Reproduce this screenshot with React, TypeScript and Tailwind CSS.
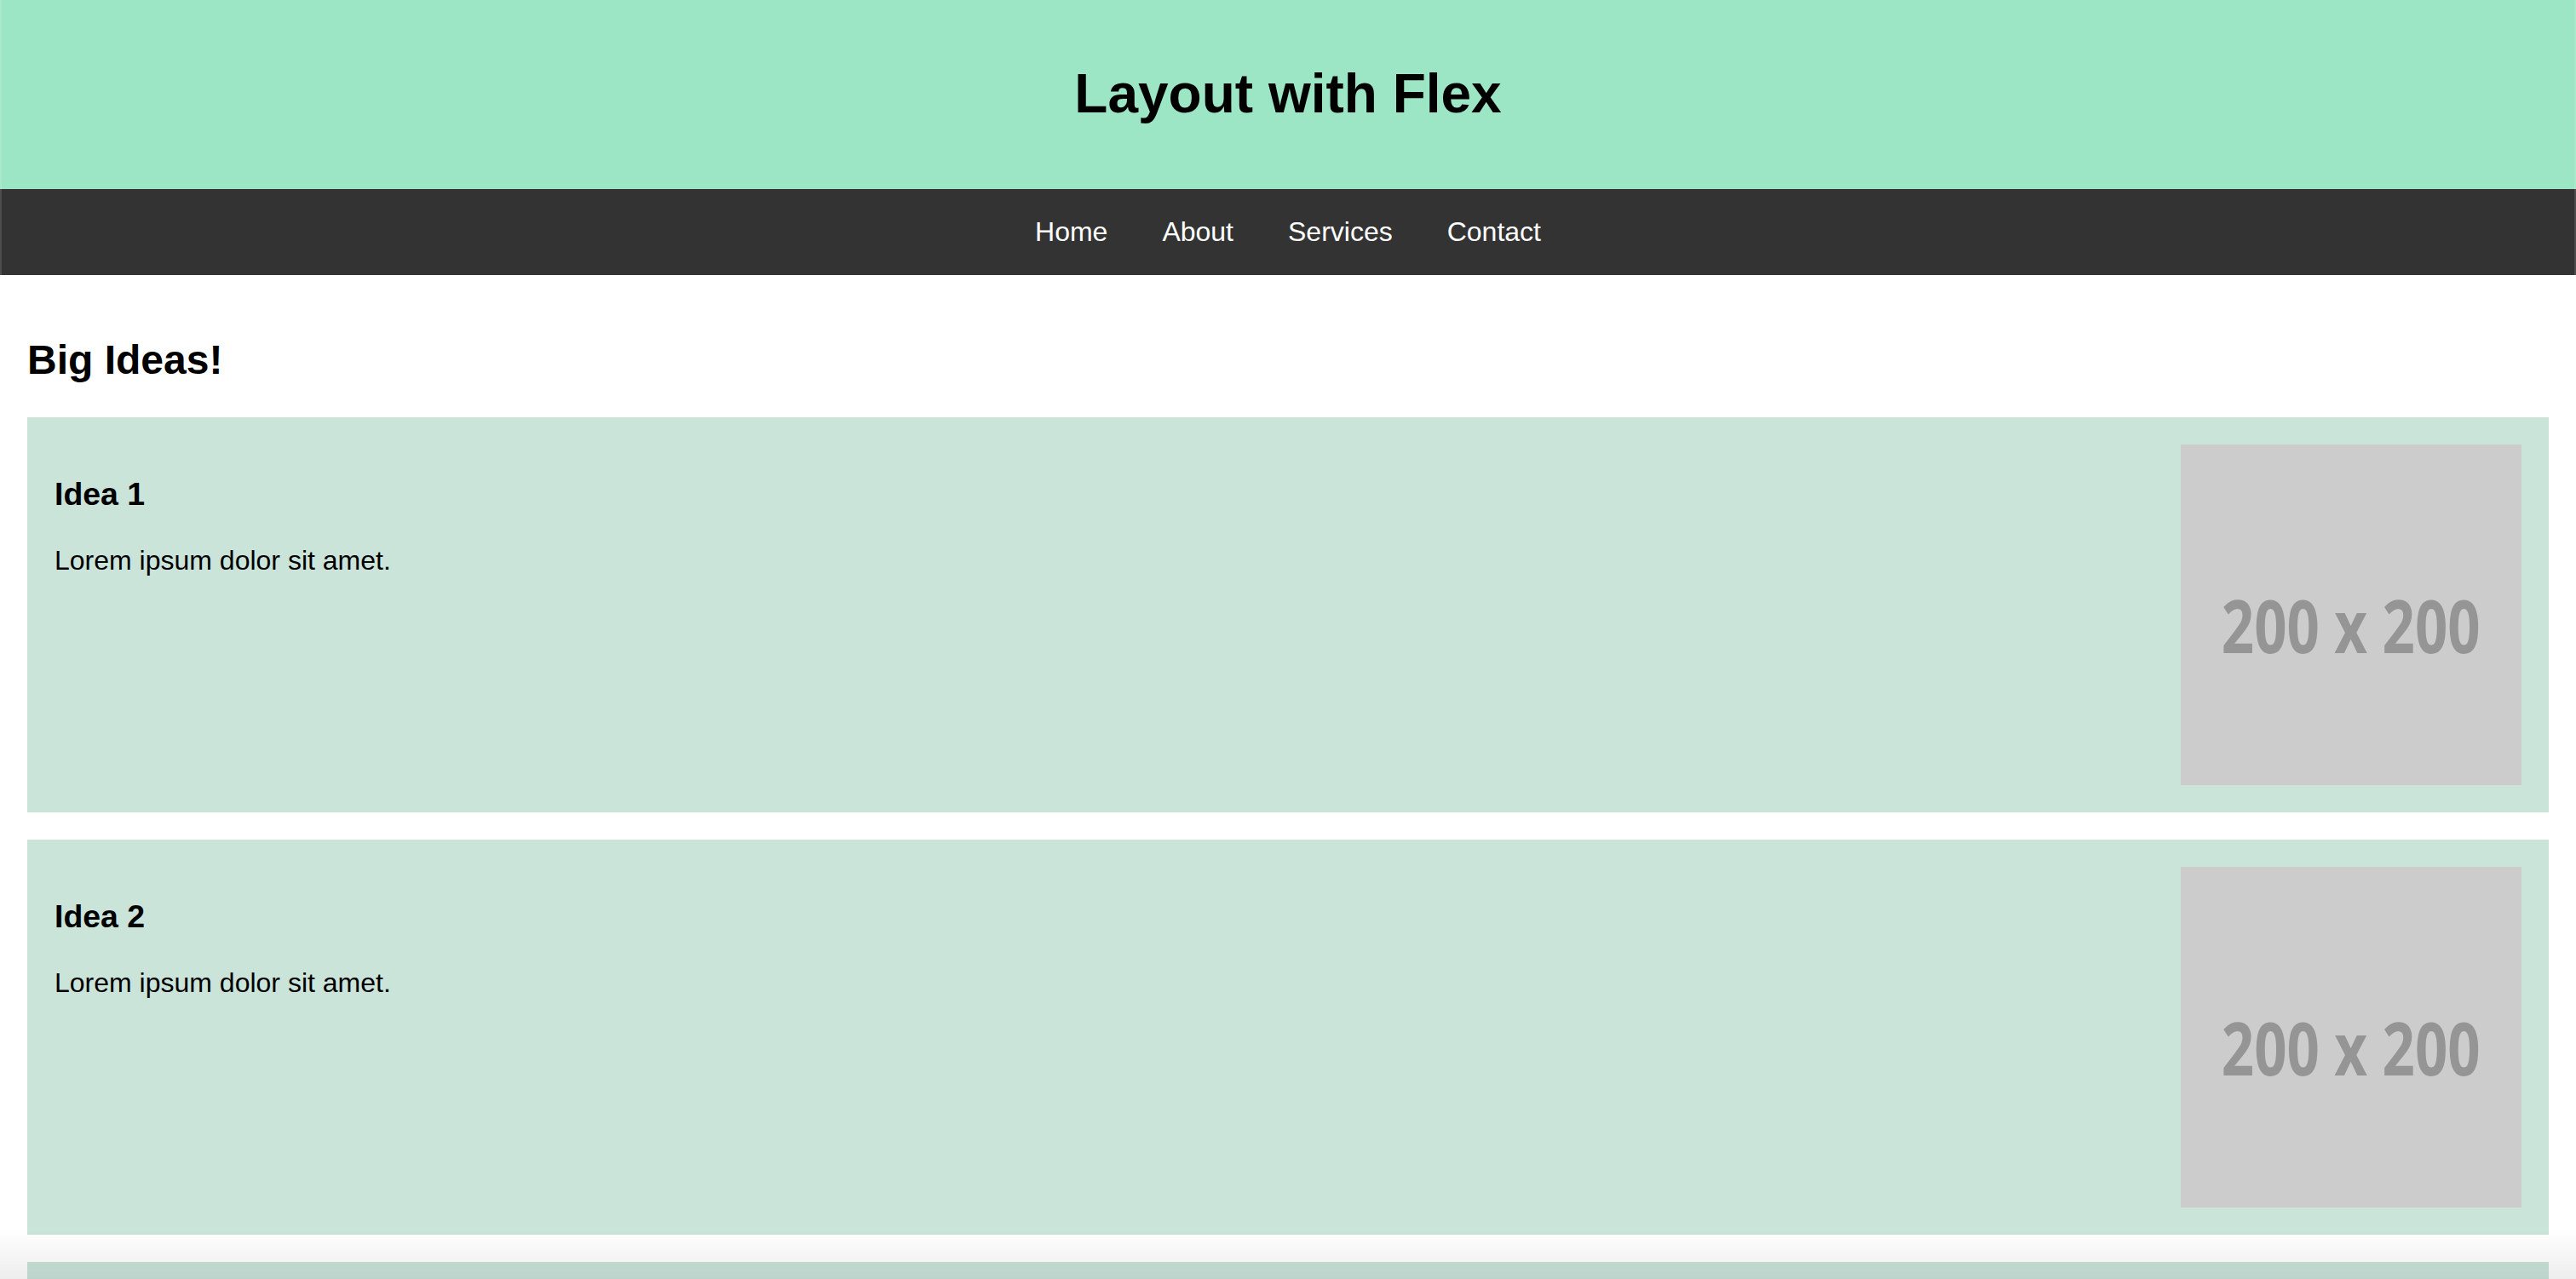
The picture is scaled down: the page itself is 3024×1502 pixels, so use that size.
import React from "react";

function Placeholder() {
  return (
    <div className="flex h-[400px] w-[400px] shrink-0 items-center justify-center bg-[#cccccc] pt-[24px]">
      <span
        className="inline-block scale-x-[0.78] text-[86px] font-bold leading-none text-[#959595]"
        style={{ fontFamily: '"Open Sans", "Liberation Sans", sans-serif' }}
      >
        200 x 200
      </span>
    </div>
  );
}

function Card({ title }: { title: string }) {
  return (
    <div className="flex items-start justify-between bg-[#cae4da] p-8">
      <div>
        <h3 className="my-[37.44px] text-[37.44px] font-bold leading-[1.149]">{title}</h3>
        <p className="my-[32px] text-[32px] leading-[1.149]">Lorem ipsum dolor sit amet.</p>
      </div>
      <Placeholder />
    </div>
  );
}

export default function App() {
  return (
    <div
      className="relative min-h-screen bg-white text-black"
      style={{ fontFamily: '"Liberation Sans", Arial, sans-serif' }}
    >
      <header className="flex h-[222px] items-center justify-center bg-[#9ce6c6]">
        <h1 className="text-[64px] font-bold leading-[1.149]">Layout with Flex</h1>
      </header>
      <nav className="flex h-[101px] items-center justify-center gap-16 bg-[#333333] text-[32px] leading-[1.149] text-white">
        <a>Home</a>
        <a>About</a>
        <a>Services</a>
        <a>Contact</a>
      </nav>
      <main className="p-8">
        <h2 className="my-[39.84px] text-[48px] font-bold leading-[1.149]">Big Ideas!</h2>
        <div className="flex flex-col gap-8">
          <Card title="Idea 1" />
          <Card title="Idea 2" />
          <Card title="Idea 3" />
        </div>
      </main>
      <div className="pointer-events-none fixed left-0 top-0 h-[323px] w-[2px] bg-white/[0.13]" />
      <div className="pointer-events-none fixed right-0 top-0 h-[323px] w-[2px] bg-white/[0.13]" />
      <div className="pointer-events-none fixed inset-x-0 bottom-0 h-[58px] bg-linear-to-b from-transparent to-black/[0.07]" />
    </div>
  );
}
